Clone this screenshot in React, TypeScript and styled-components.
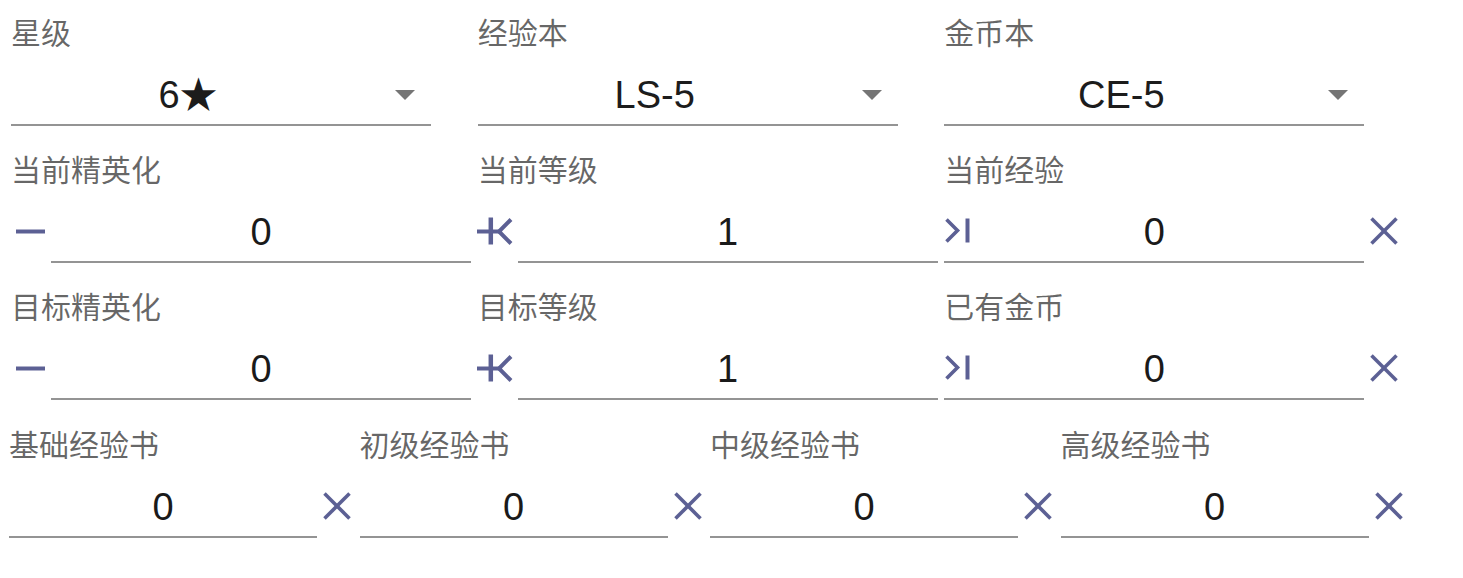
import React from 'react';
import styled, { createGlobalStyle } from 'styled-components';

const ICON = '#5c6094';
const LINE = '#949494';

const GlobalStyle = createGlobalStyle`
  body {
    margin: 0;
    background: #ffffff;
    font-family: "Liberation Sans", "Noto Sans CJK SC", sans-serif;
  }
`;

const Page = styled.div`
  width: 1400px;
  padding: 11px 0 0 11px;
  display: flex;
  flex-direction: column;
  gap: 22px;
`;

const Row = styled.div<{ $cols: number; $shift?: number }>`
  display: grid;
  grid-template-columns: repeat(${(p) => p.$cols}, 1fr);
  margin-left: ${(p) => p.$shift ?? 0}px;
  margin-top: ${(p) => (p.$shift ? 1 : 0)}px;
`;

const Cell = styled.div`
  display: flex;
  flex-direction: column;
`;

const Label = styled.div`
  font-family: "Noto Sans CJK SC", sans-serif;
  font-size: 30px;
  line-height: 40px;
  color: rgba(0, 0, 0, 0.6);
  white-space: nowrap;
`;

const Control = styled.div`
  display: flex;
  align-items: center;
  height: 75px;
  padding-top: 14px;
  box-sizing: border-box;
`;

const Field = styled.div<{ $width: number }>`
  position: relative;
  display: flex;
  align-items: center;
  width: ${(p) => p.$width}px;
  height: 61px;
  flex-shrink: 0;
  border-bottom: 2px solid ${LINE};
  box-sizing: border-box;
`;

const ValueInput = styled.input`
  width: 100%;
  height: 44px;
  padding: 2px 0 0;
  border: none;
  outline: none;
  background: transparent;
  font-family: "Liberation Sans", sans-serif;
  font-size: 38px;
  line-height: 40px;
  color: #1a1a1a;
  text-align: center;
  box-sizing: border-box;
`;

const SelectValue = styled.div`
  flex: 1;
  padding-right: 30px;
  font-family: "Liberation Sans", "Noto Sans CJK SC", sans-serif;
  font-size: 38px;
  line-height: 44px;
  color: #1c1c1c;
  text-align: center;
`;

const Arrow = styled.span`
  width: 0;
  height: 0;
  margin-right: 16px;
  border-left: 10px solid transparent;
  border-right: 10px solid transparent;
  border-top: 10px solid #757575;
`;

const IconSlot = styled.div`
  display: flex;
  width: 40px;
  height: 40px;
  margin-bottom: 4px;
  flex-shrink: 0;
`;

const Overlay = styled.div`
  position: absolute;
  left: 0;
  top: 50%;
  transform: translateY(-50%);
  display: flex;
  width: 40px;
  height: 40px;
  margin-top: -2px;
`;

const ClearButton = styled.div`
  display: flex;
  width: 28px;
  height: 28px;
  margin: 0 0 4px 6px;
  flex-shrink: 0;
`;

const MinusIcon = () => (
  <svg width="40" height="40" viewBox="0 0 40 40">
    <line x1="5" y1="20.5" x2="34" y2="20.5" stroke={ICON} strokeWidth="4" />
  </svg>
);

const FirstIcon = () => (
  <svg width="40" height="40" viewBox="0 0 40 40" style={{ overflow: 'visible' }}>
    <g stroke={ICON} strokeWidth="4" fill="none">
      <line x1="-1" y1="20.5" x2="21" y2="20.5" />
      <line x1="12.8" y1="6.5" x2="12.8" y2="33.5" strokeWidth="4.5" />
      <polyline points="33,8.5 21,20.5 33,32.5" />
    </g>
  </svg>
);

const LastIcon = () => (
  <svg width="40" height="40" viewBox="0 0 40 40">
    <g stroke={ICON} strokeWidth="3.6" fill="none">
      <polyline points="2.5,9.5 13.5,20.5 2.5,31.5" />
      <line x1="23.5" y1="8.5" x2="23.5" y2="32.5" strokeWidth="4" />
    </g>
  </svg>
);

const CloseIcon = () => (
  <svg width="28" height="28" viewBox="0 0 28 28">
    <g stroke={ICON} strokeWidth="3.6">
      <line x1="1.5" y1="1.5" x2="26.5" y2="26.5" />
      <line x1="26.5" y1="1.5" x2="1.5" y2="26.5" />
    </g>
  </svg>
);

const SelectCell = ({ label, value }: { label: string; value: string }) => (
  <Cell>
    <Label>{label}</Label>
    <Control>
      <Field $width={420}>
        <SelectValue>{value}</SelectValue>
        <Arrow />
      </Field>
    </Control>
  </Cell>
);

type StepCellProps = {
  label: string;
  value: string;
  icon: 'minus' | 'first' | 'last';
};

const StepCell = ({ label, value, icon }: StepCellProps) => (
  <Cell>
    <Label>{label}</Label>
    <Control>
      {icon !== 'last' && (
        <IconSlot>{icon === 'minus' ? <MinusIcon /> : <FirstIcon />}</IconSlot>
      )}
      <Field $width={420}>
        {icon === 'last' && (
          <Overlay>
            <LastIcon />
          </Overlay>
        )}
        <ValueInput defaultValue={value} />
      </Field>
      {icon === 'last' && (
        <ClearButton>
          <CloseIcon />
        </ClearButton>
      )}
    </Control>
  </Cell>
);

const BookCell = ({ label }: { label: string }) => (
  <Cell>
    <Label>{label}</Label>
    <Control>
      <Field $width={308}>
        <ValueInput defaultValue="0" />
      </Field>
      <ClearButton>
        <CloseIcon />
      </ClearButton>
    </Control>
  </Cell>
);

const books = ['基础经验书', '初级经验书', '中级经验书', '高级经验书'];

export default function App() {
  return (
    <>
      <GlobalStyle />
      <Page>
        <Row $cols={3}>
          <SelectCell label="星级" value="6★" />
          <SelectCell label="经验本" value="LS-5" />
          <SelectCell label="金币本" value="CE-5" />
        </Row>
        <Row $cols={3}>
          <StepCell label="当前精英化" value="0" icon="minus" />
          <StepCell label="当前等级" value="1" icon="first" />
          <StepCell label="当前经验" value="0" icon="last" />
        </Row>
        <Row $cols={3}>
          <StepCell label="目标精英化" value="0" icon="minus" />
          <StepCell label="目标等级" value="1" icon="first" />
          <StepCell label="已有金币" value="0" icon="last" />
        </Row>
        <Row $cols={4} $shift={-2}>
          {books.map((b) => (
            <BookCell key={b} label={b} />
          ))}
        </Row>
      </Page>
    </>
  );
}
